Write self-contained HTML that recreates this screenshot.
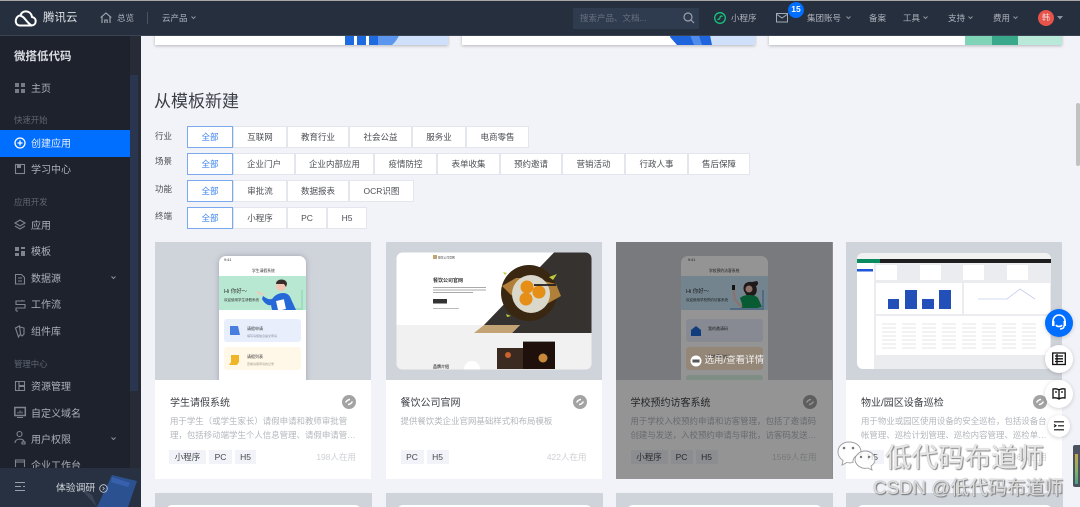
<!DOCTYPE html>
<html lang="zh"><head><meta charset="utf-8"><title>从模板新建</title>
<style>
*{box-sizing:border-box;margin:0;padding:0}
html,body{width:1080px;height:507px;overflow:hidden}
body{position:relative;background:#f2f3f8;font-family:"Liberation Sans","Noto Sans CJK SC",sans-serif;font-size:8.5px;color:#444}
#w{left:0;top:0;width:1080px;height:507px;overflow:hidden;filter:blur(.35px)}
div,span.t,svg{position:absolute}
svg{overflow:visible}
.t{position:absolute;white-space:nowrap;line-height:14px;height:14px}
#hd{left:0;top:0;width:1080px;height:36px;background:#262f3e;border-top:1px solid #a8a8a8;border-bottom:1px solid #394353;z-index:5}
#hd .t{color:#aeb3bc;font-size:8.5px}
#sb{left:0;top:36px;width:141px;height:471px;background:#1e222d;overflow:hidden;z-index:4}
#sb .t{color:#aab0ba;font-size:10px}
#sb .s{color:#5f6672;font-size:8.4px}
.ft{left:0;width:130px;height:27px;background:#006eff}
.top{top:20px;height:25px;background:#fff;box-shadow:0 1px 3px rgba(0,0,0,.25)}
.b{height:22px;top:0;background:#fff;border:1px solid #e3e6ec;margin-left:-1px;text-align:center;line-height:20px;font-size:8.5px;color:#4d4f55}
.b.on{border:1px solid #7aa9ee;color:#3d83f0;z-index:1}
.lb{left:155px;font-size:8.5px;color:#4d4f55}
.c{width:216px;height:237px;top:242px;background:#fff}
.im{left:0;top:0;width:216px;height:138px;background:#cfd3da;overflow:hidden}
.ti{font-size:10px;color:#3c3f45;top:155px}
.de{font-size:8.45px;color:#b4b7bd;line-height:14.3px;height:14px}
.tg{top:208px;height:14px;background:#f2f3f8;color:#43474f;line-height:14px;text-align:center;font-size:8.5px}
.ct{top:208px;right:15px;font-size:8.5px;color:#cdd0d5}
.next{top:493px;width:217px;height:20px;background:#cfd3da}
.next i{position:absolute;left:11px;top:12px;width:195px;height:20px;background:#fff;border-radius:6px}
.fb{border-radius:50%;background:#fff;box-shadow:0 1px 4px rgba(0,0,0,.18);z-index:8}
</style></head><body>
<div id="w">

<!-- header -->
<div id="hd">
<svg style="left:14px;top:8px" width="24" height="18" viewBox="0 0 24 18" fill="none" stroke="#fff" stroke-width="2"><path d="M6 16.500h11.500c5 0 6-7.500.5-8.500C17 1 8 .5 6.500 6.500 1 6.500-.5 16.500 6 16.500z"/><path d="M6.500 7c3 0 5 4 7.500 6.500 1.500 1.500 3 3 4 3"/></svg>
<span class="t" style="left:43px;top:10px;font-size:11.500px;color:#dfe2e6">腾讯云</span>
<svg style="left:100px;top:11px" width="12" height="12" viewBox="0 0 12 12" fill="none" stroke="#a4aab4" stroke-width="1.100"><path d="M.7 5.500 6 1l5.300 4.500M2 4.500V11M10 4.500V11M4.800 11V8h2.400v3"/></svg>
<span class="t" style="left:117px;top:10px">总览</span>
<div style="left:147px;top:11px;width:1px;height:12px;background:#4a5361"></div>
<span class="t" style="left:162px;top:10px">云产品</span>
<svg style="left:191px;top:15px" width="5" height="4" fill="none" stroke="#8d939d"><path d="M.5.500 2.500 2.500 4.500.500"/></svg>
<div style="left:573px;top:7px;width:126px;height:21px;background:#2f3b4f"></div>
<span class="t" style="left:580px;top:10px;color:#687180">搜索产品、文档...</span>
<svg style="left:683px;top:11px" width="12" height="12" fill="none" stroke="#9aa1ac" stroke-width="1.200"><circle cx="5" cy="5" r="4"/><path d="m8 8 3 3"/></svg>
<svg style="left:714px;top:11px" width="12" height="12" fill="none" stroke="#19c37d" stroke-width="1.300"><circle cx="6" cy="6" r="5.300"/><path d="M3.500 7c1.500 1 2.500-.5 2.500-1.500S7 3.500 8.500 4.500"/></svg>
<span class="t" style="left:731px;top:10px">小程序</span>
<svg style="left:776px;top:12px" width="12" height="10" fill="none" stroke="#a4aab4" stroke-width="1"><rect x=".5" y=".5" width="11" height="8.500"/><path d="m1 1.500 5 3.500 5-3.500"/></svg>
<div style="left:788px;top:1px;width:16px;height:16px;border-radius:50%;background:#006eff;color:#fff;text-align:center;line-height:15px;font-size:8.500px;font-weight:bold">15</div>
<span class="t" style="left:807px;top:10px">集团账号</span>
<svg style="left:846px;top:15px" width="5" height="4" fill="none" stroke="#8d939d"><path d="M.5.500 2.500 2.500 4.500.500"/></svg>
<span class="t" style="left:869px;top:10px">备案</span>
<span class="t" style="left:903px;top:10px">工具</span>
<svg style="left:923px;top:15px" width="5" height="4" fill="none" stroke="#8d939d"><path d="M.5.500 2.500 2.500 4.500.500"/></svg>
<span class="t" style="left:948px;top:10px">支持</span>
<svg style="left:968px;top:15px" width="5" height="4" fill="none" stroke="#8d939d"><path d="M.5.500 2.500 2.500 4.500.500"/></svg>
<span class="t" style="left:993px;top:10px">费用</span>
<svg style="left:1013px;top:15px" width="5" height="4" fill="none" stroke="#8d939d"><path d="M.5.500 2.500 2.500 4.500.500"/></svg>
<div style="left:1038px;top:9px;width:16px;height:16px;border-radius:50%;background:#e5534b;color:#f7dcd9;text-align:center;line-height:16px;font-size:8px">韩</div>
<svg style="left:1057px;top:15px" width="7" height="4"><path d="M0 0h6L3 3.500z" fill="#8d939d"/></svg>
</div>

<!-- sidebar -->
<div id="sb">
<span class="t" style="left:14px;top:14px;font-size:11.500px;font-weight:bold;color:#d8dbe0">微搭低代码</span>
<div style="left:130px;top:0;width:11px;height:471px;background:#272b36"></div>
<div style="left:130px;top:39px;width:8px;height:316px;background:#2a3550"></div>
<div class="ft" style="top:94px"></div>
<svg style="left:0;top:0" width="40" height="471" fill="none" stroke="#7f858f" stroke-width="1.100">
<g fill="#767c86" stroke="none"><rect x="15" y="47" width="4" height="4"/><rect x="21" y="47" width="4" height="4"/><rect x="15" y="53" width="4" height="4"/><rect x="21" y="53" width="4" height="4"/></g>
<circle cx="20" cy="107" r="5" stroke="#fff" stroke-width="1.300"/><path d="M17.500 107h5M20 104.500v5" stroke="#fff" stroke-width="1.300"/>
<rect x="15.500" y="128.500" width="9" height="9"/><rect x="17" y="129" width="4" height="3" fill="#7f858f" stroke="none"/>
<path d="m20 184 5 3-5 3-5-3zM15 190l5 3 5-3"/>
<path d="M15 211h4v4h-4zM15 217h4v3h-4zM21 211h4v2h-4zM21 215h4v5h-4z" fill="#7f858f" stroke="none"/>
<path d="M15.500 238.500h6l3 3v6.500h-9zM18 242h4M18 245h4"/>
<path d="M25 265h-9v3.500h9v3.500h-9v3M22 265v-1M16 275h2"/>
<path d="M15.500 292l4-2 1 8-2 3zM20 291l4 1v6l-2 2-2-2"/>
<path d="M15.500 345.500h3.500v9h-3.500zM19 345.500h5.500v4H19zM19 350.500h5.500v4H19z"/>
<rect x="14.800" y="371.500" width="10.500" height="8" stroke-width="1.500"/><path d="M17 381.500h6M18 376v1.500M20 374.500v3M22 375.500v2"/>
<circle cx="19.500" cy="398" r="2.500"/><path d="M15 407c0-5 9-5 9-1M22 406h3v2h-3z"/>
<path d="M15.500 431v-7h9v7M15.500 426h9"/>
</svg>
<span class="t" style="left:31px;top:47px">主页</span>
<span class="t s" style="left:14px;top:77px">快速开始</span>
<span class="t" style="left:31px;top:102px;color:#e6eefc">创建应用</span>
<span class="t" style="left:31px;top:128px">学习中心</span>
<span class="t s" style="left:14px;top:159px">应用开发</span>
<span class="t" style="left:31px;top:184px">应用</span>
<span class="t" style="left:31px;top:210px">模板</span>
<span class="t" style="left:31px;top:237px">数据源</span>
<svg style="left:111px;top:240px" width="5" height="4" fill="none" stroke="#8d939d"><path d="M.5.500 2.500 2.500 4.500.500"/></svg>
<span class="t" style="left:31px;top:263px">工作流</span>
<span class="t" style="left:31px;top:290px">组件库</span>
<span class="t s" style="left:14px;top:321px">管理中心</span>
<span class="t" style="left:31px;top:345px">资源管理</span>
<span class="t" style="left:31px;top:372px">自定义域名</span>
<span class="t" style="left:31px;top:398px">用户权限</span>
<svg style="left:111px;top:401px" width="5" height="4" fill="none" stroke="#8d939d"><path d="M.5.500 2.500 2.500 4.500.500"/></svg>
<span class="t" style="left:31px;top:424px">企业工作台</span>
<div style="left:0;top:432px;width:141px;height:39px;background:#273141;overflow:hidden">
<svg style="left:92px;top:4px" width="46" height="36"><path d="M-12 16 0 23l5 12z" fill="#3a4557"/><path d="M20 3 45 9 36 35H5z" fill="#2c5190"/><path d="M20 5 38 11l-2 4-17-5z" fill="#3861ad"/></svg>
<svg style="left:15px;top:14px" width="11" height="10" fill="none" stroke="#9aa0aa" stroke-width="1"><path d="M0 .5h10M0 4.500h6M8 4.500h2M0 8.500h10"/></svg>
<span class="t" style="left:56px;top:14px;font-size:9.800px;color:#d3d7dd">体验调研</span>
<svg style="left:99px;top:16px" width="9" height="9" fill="none" stroke="#c6cad1" stroke-width=".8"><circle cx="4.500" cy="4.500" r="3.800"/><path d="m3.700 3 1.600 1.500-1.600 1.500"/></svg>
</div>
</div>

<!-- top partial cards -->
<div class="top" style="left:155px;width:293px;overflow:hidden"><svg style="left:190px;top:-20px" width="103" height="45"><path d="M33 20h70v25H33z" fill="#cfe0fb"/><path d="M0 20h9v25H0zM12 20h9v25h-9zM24 20h9v25h-9z" fill="#1e6ae0"/><path d="M33 20h26c-2 11-6 20-12 25H33z" fill="#5c96ee"/></svg></div>
<div class="top" style="left:462px;width:293px;overflow:hidden"><svg style="left:200px;top:-20px" width="93" height="45"><path d="M45 20h48v25H50z" fill="#cfe0fb"/><path d="M8 37l6-17h31l5 25H15z" fill="#1e64dc"/><path d="M22 20h10l8 25h-8z" fill="#4f8ceb"/></svg></div>
<div class="top" style="left:769px;width:293px;overflow:hidden"><div style="left:196px;top:0;width:27px;height:25px;background:#7fd4b7"></div><div style="left:223px;top:0;width:26px;height:25px;background:#3aa88a"></div><div style="left:249px;top:0;width:44px;height:25px;background:#b9ead9"></div></div>

<!-- heading -->
<span class="t" style="left:154px;top:91px;height:22px;line-height:22px;font-size:17px;color:#3b3f46">从模板新建</span>

<!-- filters -->
<span class="t lb" style="top:129px">行业</span>
<div style="left:0;top:126px;width:0;height:22px">
<div class="b on" style="left:188px;width:46px">全部</div><div class="b" style="left:234px;width:54px">互联网</div><div class="b" style="left:288px;width:62px">教育行业</div><div class="b" style="left:350px;width:63px">社会公益</div><div class="b" style="left:413px;width:54px">服务业</div><div class="b" style="left:467px;width:63px">电商零售</div></div>
<span class="t lb" style="top:154px">场景</span>
<div style="left:0;top:153px;width:0;height:22px">
<div class="b on" style="left:188px;width:46px">全部</div><div class="b" style="left:234px;width:62px">企业门户</div><div class="b" style="left:296px;width:79px">企业内部应用</div><div class="b" style="left:375px;width:63px">疫情防控</div><div class="b" style="left:438px;width:63px">表单收集</div><div class="b" style="left:501px;width:62px">预约邀请</div><div class="b" style="left:563px;width:63px">营销活动</div><div class="b" style="left:626px;width:63px">行政人事</div><div class="b" style="left:689px;width:62px">售后保障</div></div>
<span class="t lb" style="top:182px">功能</span>
<div style="left:0;top:180px;width:0;height:22px">
<div class="b on" style="left:188px;width:46px">全部</div><div class="b" style="left:234px;width:54px">审批流</div><div class="b" style="left:288px;width:62px">数据报表</div><div class="b" style="left:350px;width:65px">OCR识图</div></div>
<span class="t lb" style="top:209px">终端</span>
<div style="left:0;top:207px;width:0;height:22px">
<div class="b on" style="left:188px;width:46px">全部</div><div class="b" style="left:234px;width:54px">小程序</div><div class="b" style="left:288px;width:40px">PC</div><div class="b" style="left:328px;width:40px">H5</div></div>

<!-- card 1 -->
<div class="c" style="left:155px">
<div class="im">
<svg width="216" height="138" style="left:0;top:0">
<defs><filter id="sh" x="-20%" y="-10%" width="140%" height="120%"><feGaussianBlur stdDeviation="3"/></filter></defs>
<rect x="64" y="14" width="87" height="140" rx="7" fill="#9ea3ad" filter="url(#sh)"/>
<rect x="64" y="14" width="87" height="140" rx="7" fill="#fff"/>
<rect x="64" y="34" width="87" height="34" fill="#b9e8d2"/>
<rect x="64" y="68" width="87" height="80" rx="5" fill="#fff"/>
<rect x="69" y="77" width="77" height="23" rx="3" fill="#e8eefc"/>
<rect x="69" y="105" width="77" height="23" rx="3" fill="#fff8e8"/>
<path d="M75 84h8l2 9H75z" fill="#4a7de0"/>
<path d="M76 113h8v7l-2 3h-8l2-3z" fill="#f0b429"/>
<rect x="118" y="66" width="30" height="2" fill="#9fdcc0"/><rect x="146" y="48" width="2" height="20" fill="#9fdcc0"/>
<circle cx="126" cy="44" r="5" fill="#f3c5b5"/><path d="M121 42c0-6 11-6 11 0l-1 3-2-3h-5z" fill="#3a2e2c"/>
<path d="M108 54c3 2 7 5 10 2 2-3 6-5 10-5 5 0 7 3 8 6l5 11h-24l-1-5c-3 1-7-2-9-6z" fill="#2568d8"/>
<rect x="122" y="58" width="8" height="10" fill="#fff" transform="rotate(-12 126 63)"/>
<path d="M102 50l6 3" stroke="#f3c5b5" stroke-width="2"/>
<g fill="#333" font-size="3.800" font-family="Liberation Sans,Noto Sans CJK SC,sans-serif">
<text x="69" y="19">9:41</text><text x="97" y="30">学生请假系统</text>
<text x="69" y="51" font-size="5.500">Hi 你好～</text><text x="69" y="59" font-size="3.500">欢迎使用学生请假系统</text>
<text x="92" y="88" font-size="4">请假申请</text><text x="92" y="116" font-size="4">请假列表</text>
<text x="92" y="95" font-size="3" fill="#8a90a0">填写请假信息提交申请</text><text x="92" y="123" font-size="3" fill="#a09a8a">查看请假申请的记录</text></g>
</svg>
</div>
<span class="t ti" style="left:15px">学生请假系统</span>
<svg style="left:187px;top:153px" width="14" height="14"><circle cx="7" cy="7" r="7" fill="#a3a3a3"/><path d="M3.500 7.500c2-3 3.500-3 4.500-3M6 9.500c1 0 2.500 0 4.500-3" stroke="#fff" fill="none" stroke-width="1.400"/></svg>
<span class="t de" style="left:15px;top:172px">用于学生（或学生家长）请假申请和教师审批管</span>
<span class="t de" style="left:15px;top:186px">理，包括移动端学生个人信息管理、请假申请管…</span>
<div class="tg" style="left:14px;width:37px">小程序</div><div class="tg" style="left:54px;width:23px">PC</div><div class="tg" style="left:80px;width:21px">H5</div>
<span class="t ct">198人在用</span>
</div>

<!-- card 2 -->
<div class="c" style="left:385.500px">
<div class="im">
<svg width="216" height="138" style="left:0;top:0">
<defs><clipPath id="r"><rect x="10.500" y="10.500" width="195" height="117" rx="6"/></clipPath></defs>
<g clip-path="url(#r)">
<rect x="10" y="10" width="196" height="117" fill="#fff"/>
<rect x="10" y="83" width="196" height="45" fill="#f1f1f1"/>
<path d="M168 10.500h38V91h-80l8-8H98z" fill="#35322f"/>
<path d="M88 91h38l8-8H98z" fill="#c3a274"/>
<circle cx="143" cy="51" r="28" fill="#3a2712"/>
<path d="M116 44l14-8 16 0 24 6 5 12-16 9-18-2-16-8z" fill="#b0803a"/>
<circle cx="145" cy="52" r="19" fill="#d9d8ca"/>
<circle cx="141" cy="45" r="6.500" fill="#e58f17"/><circle cx="153" cy="50" r="6.500" fill="#e58f17"/><circle cx="140" cy="57" r="6.500" fill="#e58f17"/>
<path d="M148 43h22" stroke="#1c1c1c" stroke-width="1.800"/>
<path d="M163 35l8-3-4 6z" fill="#b7cc3a"/><path d="M117 30l4 1-2 2z" fill="#b7cc3a"/><path d="M120 72l5 2-4 1z" fill="#b7cc3a"/>
<rect x="111" y="106" width="26" height="21" fill="#3a2a20"/><circle cx="122" cy="113" r="3" fill="#c9622c"/>
<rect x="137" y="99" width="32" height="28" fill="#1f100c"/><rect x="137" y="99" width="32" height="1" fill="#999"/>
<circle cx="157" cy="116" r="4.500" fill="#c88a3a"/>
<circle cx="86" cy="127" r="8" fill="#fff"/>
<g fill="#444" font-family="Liberation Sans,Noto Sans CJK SC,sans-serif">
<rect x="47" y="13" width="4" height="4" fill="#c3a274"/><text x="52" y="16.500" font-size="2.800">餐饮公司官网</text>
<text x="47" y="40" font-size="5" font-weight="bold" fill="#333">餐饮公司官网</text>
<rect x="47" y="45" width="53" height="1" fill="#aaa"/><rect x="47" y="47.500" width="53" height="1" fill="#aaa"/><rect x="47" y="50" width="40" height="1" fill="#aaa"/>
<rect x="47" y="57" width="14" height="4.500" fill="#333"/>
<rect x="47" y="66" width="26" height="1" fill="#bbb"/>
<text x="47" y="126" font-size="4" font-weight="bold">品牌介绍</text></g>
</g>
</svg>
</div>
<span class="t ti" style="left:15px">餐饮公司官网</span>
<svg style="left:187px;top:153px" width="14" height="14"><circle cx="7" cy="7" r="7" fill="#a3a3a3"/><path d="M3.500 7.500c2-3 3.500-3 4.500-3M6 9.500c1 0 2.500 0 4.500-3" stroke="#fff" fill="none" stroke-width="1.400"/></svg>
<span class="t de" style="left:15px;top:172px">提供餐饮类企业官网基础样式和布局模板</span>
<div class="tg" style="left:15px;width:23px">PC</div><div class="tg" style="left:41px;width:22px">H5</div>
<span class="t ct">422人在用</span>
</div>

<!-- card 3 -->
<div class="c" style="left:615.500px">
<div class="im">
<svg width="216" height="138" style="left:0;top:0">
<rect x="65" y="14" width="87" height="140" rx="7" fill="#fff"/>
<rect x="65" y="34" width="87" height="34" fill="#c6e4f7"/>
<rect x="65" y="68" width="87" height="80" rx="5" fill="#fff"/>
<rect x="70" y="77" width="77" height="23" rx="3" fill="#e8eefc"/>
<rect x="70" y="105" width="77" height="23" rx="3" fill="#ffe9cf"/>
<rect x="70" y="133" width="77" height="10" rx="3" fill="#d9f4e4"/>
<path d="M75 88l5-4 5 4v6H75z" fill="#1f6ad8"/>
<path d="M128 49c-2-7 3-10 8-9l5-1c2 2 1 4-1 5 2 5 0 9-3 10h-6z" fill="#3a2a2c"/>
<circle cx="133" cy="47" r="3.500" fill="#f3c5b5"/>
<path d="M124 56c4-4 15-4 18 0l4 9-5 1v2h-16l1-6z" fill="#0f9d58"/>
<path d="M117 46l2 12 7 7" stroke="#f3c5b5" stroke-width="2" fill="none"/>
<rect x="116" y="43" width="3" height="5" fill="#222"/>
<rect x="114" y="66" width="34" height="2" fill="#8fb8e0"/><rect x="146" y="48" width="2" height="20" fill="#8fb8e0"/>
<g fill="#333" font-size="3.800" font-family="Liberation Sans,Noto Sans CJK SC,sans-serif">
<text x="72" y="19">9:41</text><text x="93" y="30">学校预约访客系统</text>
<text x="70" y="51" font-size="5.500">Hi 你好～</text><text x="70" y="59" font-size="3.500">欢迎使用学校预约访客系统</text>
<text x="92" y="88" font-size="4">我的邀请码</text><text x="92" y="116" font-size="4">我的预约申请</text></g>
</svg>
</div>
<span class="t ti" style="left:15px;width:90px">学校预约访客系统</span>
<svg style="left:187px;top:153px" width="14" height="14"><circle cx="7" cy="7" r="7" fill="#a3a3a3"/><path d="M3.500 7.500c2-3 3.500-3 4.500-3M6 9.500c1 0 2.500 0 4.500-3" stroke="#fff" fill="none" stroke-width="1.400"/></svg>
<span class="t de" style="left:15px;top:172px">用于学校入校预约申请和访客管理，包括了邀请码</span>
<span class="t de" style="left:15px;top:186px">创建与发送，入校预约申请与审批，访客码发送…</span>
<div class="tg" style="left:15px;width:37px">小程序</div><div class="tg" style="left:55px;width:22px">PC</div><div class="tg" style="left:80px;width:22px">H5</div>
<span class="t ct">1569人在用</span>
<div style="left:0;top:0;width:217px;height:237px;background:rgba(0,0,0,.42)"></div>
<svg style="left:74px;top:113px" width="12" height="12"><circle cx="6" cy="6" r="5.500" fill="#fff"/><path d="M2.500 6h7" stroke="#555" stroke-width="3"/></svg>
<span class="t" style="left:89px;top:112px;color:#f1f1f1;font-size:9.500px">选用/查看详情</span>
</div>

<!-- card 4 -->
<div class="c" style="left:846px">
<div class="im">
<svg width="216" height="138" style="left:0;top:0">
<rect x="11" y="11" width="194" height="116" rx="6" fill="#fff"/>
<path d="M11 17a6 6 0 0 1 6-6h182a6 6 0 0 1 6 6z" fill="#f1f1f1"/>
<rect x="11" y="17" width="194" height="4" fill="#1f1f1f"/><rect x="11" y="17" width="23" height="4" fill="#0a8a5f"/>
<path d="M28 21h177v100a6 6 0 0 1-6 6H28z" fill="#ebecef"/>
<rect x="11" y="27" width="16" height="2.500" fill="#1f56d8"/>
<g fill="#fff"><rect x="30" y="23" width="21" height="15"/><rect x="74" y="23" width="21" height="15"/><rect x="117" y="23" width="21" height="15"/><rect x="161" y="23" width="21" height="15"/><rect x="30" y="41" width="86" height="31"/><rect x="118" y="41" width="86" height="31"/><rect x="30" y="74" width="174" height="39"/></g>
<g fill="#2350b8"><rect x="42" y="57" width="11" height="10"/><rect x="59" y="48" width="12" height="19"/><rect x="76" y="57" width="12" height="10"/><rect x="93" y="48" width="12" height="19"/></g>
<path d="M132 57h29l13-10 15 10" stroke="#c5cdf0" fill="none" stroke-width=".8"/>
<g stroke="#dcdcdc" stroke-width=".8" stroke-dasharray="14 6"><path d="M36 82h160M36 86h160M36 90h160M36 94h160M36 98h160M36 102h160M36 106h160"/></g>
</svg>
</div>
<span class="t ti" style="left:15px">物业/园区设备巡检</span>
<svg style="left:187px;top:153px" width="14" height="14"><circle cx="7" cy="7" r="7" fill="#a3a3a3"/><path d="M3.500 7.500c2-3 3.500-3 4.500-3M6 9.500c1 0 2.500 0 4.500-3" stroke="#fff" fill="none" stroke-width="1.400"/></svg>
<span class="t de" style="left:15px;top:172px">用于物业或园区使用设备的安全巡检，包括设备台</span>
<span class="t de" style="left:15px;top:186px">帐管理、巡检计划管理、巡检内容管理、巡检单…</span>
<div class="tg" style="left:15px;width:23px">H5</div>
<span class="t ct">86人在用</span>
</div>

<!-- next row -->
<div class="next" style="left:155px"><i></i></div>
<div class="next" style="left:385.500px"><i></i></div>
<div class="next" style="left:615.500px"><i></i></div>
<div class="next" style="left:846px"><i></i></div>

<!-- scrollbar -->
<div style="left:1076px;top:103px;width:4px;height:63px;background:#c1c1c1;border-radius:2px"></div>

<!-- floating buttons -->
<div class="fb" style="left:1045px;top:309px;width:28px;height:28px;background:#006eff"></div>
<svg style="left:1045px;top:309px;z-index:9" width="28" height="28" fill="none" stroke="#fff" stroke-width="1.600"><path d="M8 15v-3a6 6 0 0 1 12 0v3"/><rect x="7" y="12" width="2.500" height="5" fill="#fff" stroke="none"/><rect x="18.500" y="12" width="2.500" height="5" fill="#fff" stroke="none"/><path d="M11 16c1 2 5 2 6 0"/><path d="M19 17c0 2-2 3-4 3"/></svg>
<div class="fb" style="left:1045px;top:345px;width:28px;height:28px"></div>
<svg style="left:1052px;top:352px;z-index:9" width="14" height="14" fill="none" stroke="#111" stroke-width="1.300"><rect x=".7" y="1" width="12.600" height="11.500"/><path d="M3 4h8M3 6.800h8M3 9.500h8M5 2v10"/></svg>
<div class="fb" style="left:1045px;top:380px;width:28px;height:28px"></div>
<svg style="left:1052px;top:387px;z-index:9" width="14" height="14" fill="none" stroke="#111" stroke-width="1.300"><path d="M7 3C6 2 3 1.500 1 2v9c2-.5 5 0 6 1 1-1 4-1.500 6-1V2c-2-.5-5 0-6 1zM7 3v9M3 5h2M9 5h2"/></svg>
<div class="fb" style="left:1048px;top:415px;width:22px;height:22px"></div>
<svg style="left:1054px;top:421px;z-index:9" width="11" height="10" fill="none" stroke="#111" stroke-width="1.100"><path d="M0 .8h10M4 4.800h6M0 8.800h10M0 3.500l2 1.300-2 1.300"/></svg>

<!-- meter -->
<div style="left:1073px;top:445px;width:7px;height:42px;background:#4d5260;border-radius:2px 0 0 2px;z-index:8"></div>
<div style="left:1075px;top:454px;width:3px;height:30px;background:linear-gradient(#c9a64a,#7fb36a 60%,#47a383);z-index:9"></div>

<!-- watermark -->
<svg style="left:838px;top:440px;z-index:10" width="50" height="40" fill="rgba(255,255,255,.75)" stroke="#9c9c9c" stroke-width=".9"><path d="M11 2c7 0 12 4 12 10 0 1 0 2-.5 2.500-5 .5-8 4-7.500 8-2 .5-4 .5-6 0L4 25l1-4.500C2 18.500 0 15.500 0 12 0 6 5 2 11 2z"/><path d="M27 11c6 0 10 4 10 8.500 0 3-1.500 5-4 6.500l1 4-4-2c-6 1.500-12-2-13-8 0-5 5-9 10-9z"/><g fill="#777" stroke="none"><circle cx="6" cy="8" r="1.300"/><circle cx="15" cy="8" r="1.300"/><circle cx="23" cy="17" r="1.200"/><circle cx="31" cy="17" r="1.200"/></g></svg>
<span class="t" style="left:885px;top:443px;height:30px;line-height:30px;font-size:26.500px;color:rgba(255,255,255,.8);text-shadow:0 0 1px #777,1px 1px 1px #888;z-index:10">低代码布道师</span>
<span class="t" style="left:873px;top:478px;height:20px;line-height:20px;font-size:18.800px;color:rgba(255,255,255,.75);text-shadow:0 0 1px #666,1px 1px 1px #777;z-index:10">CSDN @低代码布道师</span>
</div>
</body></html>
